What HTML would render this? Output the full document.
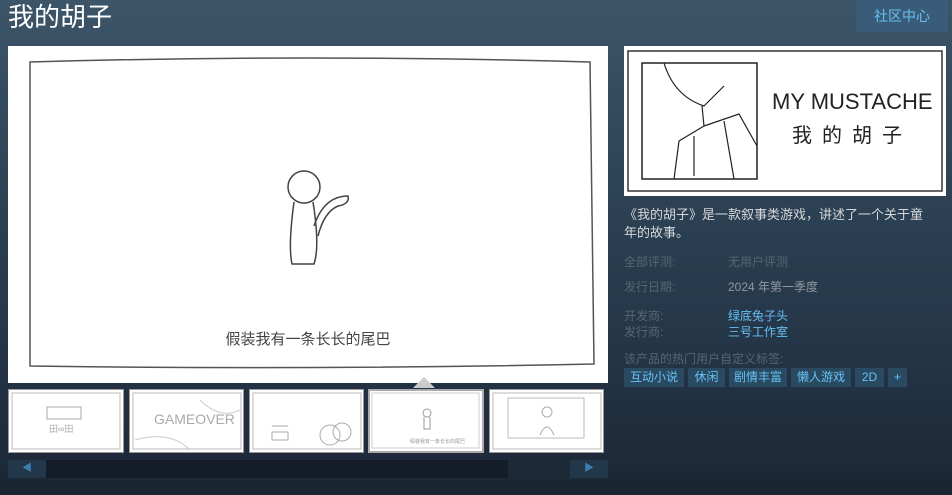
<!DOCTYPE html>
<html><head><meta charset="utf-8"><style>
*{margin:0;padding:0;box-sizing:border-box}
body{width:952px;height:495px;overflow:hidden;position:relative;font-family:"Liberation Sans","Noto Sans CJK SC",sans-serif;
background:linear-gradient(180deg,#3d5569 0%,#2e4457 35%,#233345 75%,#1b2634 100%)}
.a{position:absolute}
.t{left:8px;top:0px;font-size:26px;color:#fff;line-height:34px}
.btn{left:856px;top:0;width:92px;height:32px;background:#3a5c78;color:#66c0f4;font-size:14px;text-align:center;line-height:32px}
.main{left:8px;top:46px;width:600px;height:337px;background:#fff}
.cap{left:624px;top:46px;width:322px;height:150px;background:#fff}
.desc{left:624px;top:206px;width:302px;color:#d6d7d8;font-size:13px;line-height:18px}
.lab{color:#556772;font-size:12px}
.val{color:#8f98a0;font-size:12px}
.lnk{color:#66c0f4;font-size:12px}
.tag{top:368px;height:19px;background:#2a4a62;color:#67c1f5;font-size:12px;line-height:19px;text-align:center}
.th{top:389px;height:64px;background:#fff;border:1px solid #999}
.th svg{position:absolute;left:0;top:0}
.sb{left:8px;top:460px;width:600px;height:18px;background:#1c2a38}
</style></head><body>
<div class="a t">我的胡子</div>
<div class="a btn">社区中心</div>
<div class="a main">
<svg width="600" height="337" viewBox="0 0 600 337">
<path d="M22 16 Q300 8 582 16 L586 318 Q300 324 22 320 Z" fill="none" stroke="#555" stroke-width="1.5"/>
<circle cx="296" cy="141" r="16" fill="none" stroke="#444" stroke-width="1.5"/>
<path d="M286 156 Q280 200 284 218 L306 218 Q312 200 305 156" fill="none" stroke="#444" stroke-width="1.5"/>
<path d="M306 180 Q316 150 340 150 Q342 158 330 160 Q316 166 310 190" fill="none" stroke="#444" stroke-width="1.5"/>
<text x="300" y="298" font-size="15" fill="#444" text-anchor="middle" font-family="Noto Sans CJK SC,sans-serif">假装我有一条长长的尾巴</text>
</svg></div>
<div class="a cap">
<svg width="322" height="150"><rect x="4" y="5" width="314" height="140" fill="none" stroke="#333" stroke-width="1.5"/>
<rect x="18" y="17" width="115" height="116" fill="none" stroke="#222" stroke-width="1.5"/>
<path d="M40 17 Q50 50 80 60 L100 40 M78 60 L80 80 L115 68 L133 100 M80 80 L55 95 L50 133 M100 75 L110 133 M70 90 L70 130" fill="none" stroke="#222" stroke-width="1.2"/>
<text x="148" y="63" font-size="22" fill="#222" font-family="Liberation Sans,sans-serif">MY MUSTACHE</text>
<text x="168" y="96" font-size="20" fill="#222" letter-spacing="10" font-family="Noto Sans CJK SC,sans-serif">我的胡子</text></svg></div>
<div class="a desc">《我的胡子》是一款叙事类游戏，讲述了一个关于童年的故事。</div>
<div class="a lab" style="left:624px;top:253px">全部评测:</div><div class="a val" style="left:728px;top:253px;color:#556772">无用户评测</div>
<div class="a lab" style="left:624px;top:278px">发行日期:</div><div class="a val" style="left:728px;top:278px">2024 年第一季度</div>
<div class="a lab" style="left:624px;top:307px">开发商:</div><div class="a lnk" style="left:728px;top:307px">绿底兔子头</div>
<div class="a lab" style="left:624px;top:323px">发行商:</div><div class="a lnk" style="left:728px;top:323px">三号工作室</div>
<div class="a lab" style="left:624px;top:350px">该产品的热门用户自定义标签:</div>
<div class="a tag" style="left:624px;width:60px">互动小说</div>
<div class="a tag" style="left:688px;width:37px">休闲</div>
<div class="a tag" style="left:729px;width:58px">剧情丰富</div>
<div class="a tag" style="left:791px;width:60px">懒人游戏</div>
<div class="a tag" style="left:855px;width:29px">2D</div>
<div class="a tag" style="left:888px;width:19px">+</div>
<div class="a" style="left:413px;top:377px;width:0;height:0;border-left:11px solid transparent;border-right:11px solid transparent;border-bottom:11px solid #ccc"></div>
<div class="a th" style="left:8px;width:116px"><svg width="116" height="64"><rect x="3" y="3" width="108" height="56" fill="none" stroke="#bbb"/><rect x="38" y="17" width="34" height="12" fill="none" stroke="#aaa"/><text x="40" y="42" font-size="9" fill="#aaa">田∞田</text></svg></div>
<div class="a th" style="left:129px;width:115px"><svg width="115" height="64"><rect x="3" y="3" width="108" height="56" fill="none" stroke="#bbb"/><text x="24" y="34" font-size="14" fill="#aaa">GAMEOVER</text><path d="M5 50 Q40 40 60 60 M70 10 Q90 30 110 20" stroke="#ccc" fill="none"/></svg></div>
<div class="a th" style="left:249px;width:115px"><svg width="115" height="64"><rect x="3" y="3" width="108" height="56" fill="none" stroke="#bbb"/><path d="M22 36 h16 M22 50 h16 v-8 h-16z" stroke="#aaa" fill="none"/><circle cx="80" cy="45" r="10" fill="none" stroke="#aaa"/><circle cx="92" cy="42" r="9" fill="none" stroke="#aaa"/></svg></div>
<div class="a th" style="left:368px;width:116px;border:2px solid #aaa"><svg width="112" height="60"><rect x="2" y="2" width="107" height="55" fill="none" stroke="#ccc"/><circle cx="57" cy="22" r="4" fill="none" stroke="#999"/><path d="M54 26 v12 h6 v-12" stroke="#999" fill="none"/><text x="40" y="52" font-size="5" fill="#999">假装我有一条长长的尾巴</text></svg></div>
<div class="a th" style="left:489px;width:115px"><svg width="115" height="64"><rect x="3" y="3" width="108" height="56" fill="none" stroke="#bbb"/><rect x="18" y="8" width="76" height="40" fill="none" stroke="#bbb"/><circle cx="57" cy="22" r="5" fill="none" stroke="#aaa"/><path d="M50 45 q7-16 14 0" stroke="#aaa" fill="none"/></svg></div>
<div class="a sb"><div class="a" style="left:0;top:0;width:38px;height:18px;background:#22384a;color:#3b7fb0;font-size:10px;text-align:center;line-height:18px">◀</div>
<div class="a" style="left:38px;top:0;width:462px;height:18px;background:#141d27"></div>
<div class="a" style="left:562px;top:0;width:38px;height:18px;background:#22384a;color:#3b7fb0;font-size:10px;text-align:center;line-height:18px">▶</div></div>
<div class="a" style="left:0;top:480px;width:952px;height:15px;background:#1b2633"></div>
</body></html>
